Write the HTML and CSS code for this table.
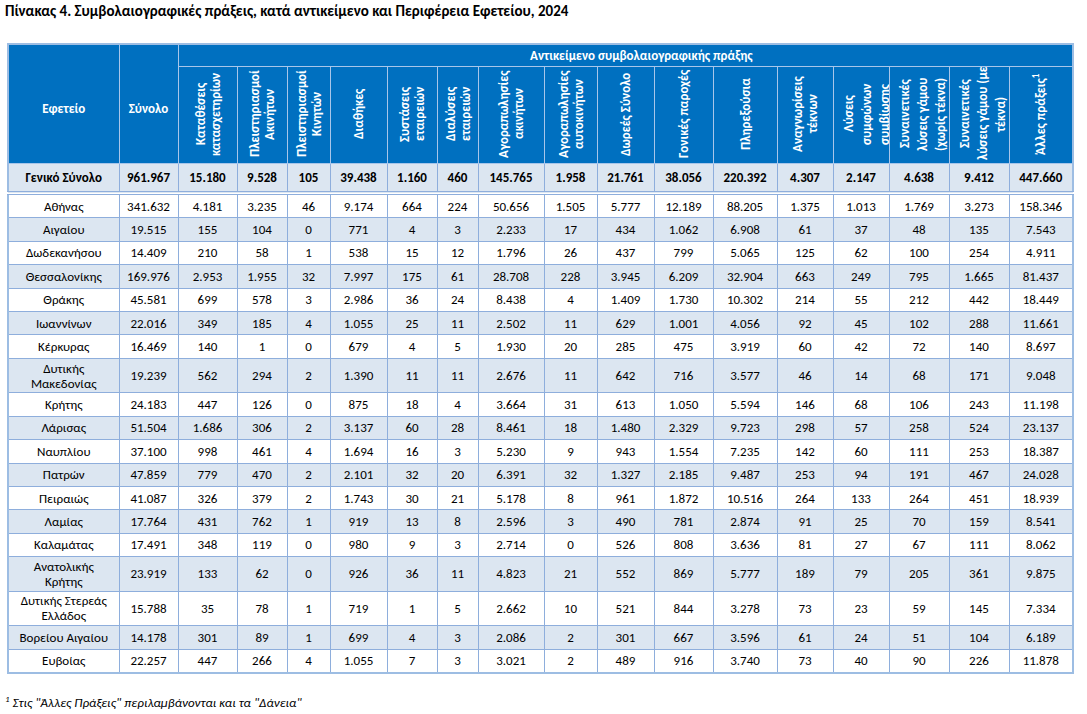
FILE: index.html
```html
<!DOCTYPE html>
<html lang="el">
<head>
<meta charset="utf-8">
<title>Πίνακας 4</title>
<link rel="stylesheet" href="styles.css">
</head>
<body>
<div class="page">
<h1 class="title">Πίνακας 4. Συμβολαιογραφικές πράξεις, κατά αντικείμενο και Περιφέρεια Εφετείου, 2024</h1>
<table class="grid">
<colgroup>
<col class="c-name"><col class="c59"><col class="c59"><col class="c50"><col class="c43"><col class="c57"><col class="c50"><col class="c41"><col class="c66"><col class="c53"><col class="c57"><col class="c59"><col class="c64"><col class="c56"><col class="c56"><col class="c60"><col class="c60"><col class="c64">
</colgroup>
<thead>
<tr class="hrow1">
<th rowspan="2" class="side">Εφετείο</th>
<th rowspan="2" class="side">Σύνολο</th>
<th colspan="16" class="group"><span class="group-label">Αντικείμενο συμβολαιογραφικής πράξης</span></th>
</tr>
<tr class="hrow2">
<th><span class="vt">Καταθέσεις<br>κατασχετηρίων</span></th>
<th><span class="vt">Πλειστηριασμοί<br>Ακινήτων</span></th>
<th><span class="vt">Πλειστηριασμοί<br>Κινητών</span></th>
<th><span class="vt">Διαθήκες</span></th>
<th><span class="vt">Συστάσεις<br>εταιρειών</span></th>
<th><span class="vt">Διαλύσεις<br>εταιρειών</span></th>
<th><span class="vt">Αγοραπωλησίες<br>ακινήτων</span></th>
<th><span class="vt">Αγοραπωλησίες<br>αυτοκινήτων</span></th>
<th><span class="vt">Δωρεές Σύνολο</span></th>
<th><span class="vt">Γονικές παροχές</span></th>
<th><span class="vt">Πληρεξούσια</span></th>
<th><span class="vt">Αναγνωρίσεις<br>τέκνων</span></th>
<th class="clip"><span class="vt">Λύσεις<br>συμφώνων<br>συμβίωσης</span></th>
<th class="clip"><span class="vt">Συναινετικές<br>λύσεις γάμου<br>(χωρίς τέκνα)</span></th>
<th class="clip"><span class="vt">Συναινετικές<br>λύσεις γάμου (με<br>τέκνα)</span></th>
<th><span class="vt">Άλλες πράξεις<sup>1</sup></span></th>
</tr>
</thead>
<tbody>
<tr class="total"><td>Γενικό Σύνολο</td><td>961.967</td><td>15.180</td><td>9.528</td><td>105</td><td>39.438</td><td>1.160</td><td>460</td><td>145.765</td><td>1.958</td><td>21.761</td><td>38.056</td><td>220.392</td><td>4.307</td><td>2.147</td><td>4.638</td><td>9.412</td><td>447.660</td></tr>
<tr><td>Αθήνας</td><td>341.632</td><td>4.181</td><td>3.235</td><td>46</td><td>9.174</td><td>664</td><td>224</td><td>50.656</td><td>1.505</td><td>5.777</td><td>12.189</td><td>88.205</td><td>1.375</td><td>1.013</td><td>1.769</td><td>3.273</td><td>158.346</td></tr>
<tr class="alt"><td>Αιγαίου</td><td>19.515</td><td>155</td><td>104</td><td>0</td><td>771</td><td>4</td><td>3</td><td>2.233</td><td>17</td><td>434</td><td>1.062</td><td>6.908</td><td>61</td><td>37</td><td>48</td><td>135</td><td>7.543</td></tr>
<tr><td>Δωδεκανήσου</td><td>14.409</td><td>210</td><td>58</td><td>1</td><td>538</td><td>15</td><td>12</td><td>1.796</td><td>26</td><td>437</td><td>799</td><td>5.065</td><td>125</td><td>62</td><td>100</td><td>254</td><td>4.911</td></tr>
<tr class="alt"><td>Θεσσαλονίκης</td><td>169.976</td><td>2.953</td><td>1.955</td><td>32</td><td>7.997</td><td>175</td><td>61</td><td>28.708</td><td>228</td><td>3.945</td><td>6.209</td><td>32.904</td><td>663</td><td>249</td><td>795</td><td>1.665</td><td>81.437</td></tr>
<tr><td>Θράκης</td><td>45.581</td><td>699</td><td>578</td><td>3</td><td>2.986</td><td>36</td><td>24</td><td>8.438</td><td>4</td><td>1.409</td><td>1.730</td><td>10.302</td><td>214</td><td>55</td><td>212</td><td>442</td><td>18.449</td></tr>
<tr class="alt"><td>Ιωαννίνων</td><td>22.016</td><td>349</td><td>185</td><td>4</td><td>1.055</td><td>25</td><td>11</td><td>2.502</td><td>11</td><td>629</td><td>1.001</td><td>4.056</td><td>92</td><td>45</td><td>102</td><td>288</td><td>11.661</td></tr>
<tr><td>Κέρκυρας</td><td>16.469</td><td>140</td><td>1</td><td>0</td><td>679</td><td>4</td><td>5</td><td>1.930</td><td>20</td><td>285</td><td>475</td><td>3.919</td><td>60</td><td>42</td><td>72</td><td>140</td><td>8.697</td></tr>
<tr class="alt tall"><td>Δυτικής<br>Μακεδονίας</td><td>19.239</td><td>562</td><td>294</td><td>2</td><td>1.390</td><td>11</td><td>11</td><td>2.676</td><td>11</td><td>642</td><td>716</td><td>3.577</td><td>46</td><td>14</td><td>68</td><td>171</td><td>9.048</td></tr>
<tr><td>Κρήτης</td><td>24.183</td><td>447</td><td>126</td><td>0</td><td>875</td><td>18</td><td>4</td><td>3.664</td><td>31</td><td>613</td><td>1.050</td><td>5.594</td><td>146</td><td>68</td><td>106</td><td>243</td><td>11.198</td></tr>
<tr class="alt"><td>Λάρισας</td><td>51.504</td><td>1.686</td><td>306</td><td>2</td><td>3.137</td><td>60</td><td>28</td><td>8.461</td><td>18</td><td>1.480</td><td>2.329</td><td>9.723</td><td>298</td><td>57</td><td>258</td><td>524</td><td>23.137</td></tr>
<tr><td>Ναυπλίου</td><td>37.100</td><td>998</td><td>461</td><td>4</td><td>1.694</td><td>16</td><td>3</td><td>5.230</td><td>9</td><td>943</td><td>1.554</td><td>7.235</td><td>142</td><td>60</td><td>111</td><td>253</td><td>18.387</td></tr>
<tr class="alt"><td>Πατρών</td><td>47.859</td><td>779</td><td>470</td><td>2</td><td>2.101</td><td>32</td><td>20</td><td>6.391</td><td>32</td><td>1.327</td><td>2.185</td><td>9.487</td><td>253</td><td>94</td><td>191</td><td>467</td><td>24.028</td></tr>
<tr><td>Πειραιώς</td><td>41.087</td><td>326</td><td>379</td><td>2</td><td>1.743</td><td>30</td><td>21</td><td>5.178</td><td>8</td><td>961</td><td>1.872</td><td>10.516</td><td>264</td><td>133</td><td>264</td><td>451</td><td>18.939</td></tr>
<tr class="alt"><td>Λαμίας</td><td>17.764</td><td>431</td><td>762</td><td>1</td><td>919</td><td>13</td><td>8</td><td>2.596</td><td>3</td><td>490</td><td>781</td><td>2.874</td><td>91</td><td>25</td><td>70</td><td>159</td><td>8.541</td></tr>
<tr><td>Καλαμάτας</td><td>17.491</td><td>348</td><td>119</td><td>0</td><td>980</td><td>9</td><td>3</td><td>2.714</td><td>0</td><td>526</td><td>808</td><td>3.636</td><td>81</td><td>27</td><td>67</td><td>111</td><td>8.062</td></tr>
<tr class="alt tall"><td>Ανατολικής<br>Κρήτης</td><td>23.919</td><td>133</td><td>62</td><td>0</td><td>926</td><td>36</td><td>11</td><td>4.823</td><td>21</td><td>552</td><td>869</td><td>5.777</td><td>189</td><td>79</td><td>205</td><td>361</td><td>9.875</td></tr>
<tr class="tall"><td>Δυτικής Στερεάς<br>Ελλάδος</td><td>15.788</td><td>35</td><td>78</td><td>1</td><td>719</td><td>1</td><td>5</td><td>2.662</td><td>10</td><td>521</td><td>844</td><td>3.278</td><td>73</td><td>23</td><td>59</td><td>145</td><td>7.334</td></tr>
<tr class="alt"><td>Βορείου Αιγαίου</td><td>14.178</td><td>301</td><td>89</td><td>1</td><td>699</td><td>4</td><td>3</td><td>2.086</td><td>2</td><td>301</td><td>667</td><td>3.596</td><td>61</td><td>24</td><td>51</td><td>104</td><td>6.189</td></tr>
<tr><td>Ευβοίας</td><td>22.257</td><td>447</td><td>266</td><td>4</td><td>1.055</td><td>7</td><td>3</td><td>3.021</td><td>2</td><td>489</td><td>916</td><td>3.740</td><td>73</td><td>40</td><td>90</td><td>226</td><td>11.878</td></tr>
</tbody>
</table>
<p class="note"><sup>1</sup> Στις "Άλλες Πράξεις" περιλαμβάνονται και τα "Δάνεια"</p>
</div>
</body>
</html>
```

FILE: styles.css
```css
html, body {
  margin: 0;
  padding: 0;
  background: #ffffff;
}

body {
  font-family: Carlito, Calibri, "Open Sans", sans-serif;
  color: #000000;
}

.page {
  padding: 2px 0 0 5px;
}

.title {
  margin: 0;
  font-size: 15px;
  font-weight: bold;
  line-height: 18px;
  height: 41px;
}

.grid {
  margin-left: 2px;
  border-collapse: collapse;
  table-layout: fixed;
  width: 1065px;
  border: 2px solid #9dbde3;
  font-size: 13px;
}

.c-name { width: 111px; }
.c59 { width: 59px; }
.c50 { width: 50px; }
.c43 { width: 43px; }
.c57 { width: 57px; }
.c41 { width: 41px; }
.c66 { width: 66px; }
.c53 { width: 53px; }
.c64 { width: 64px; }
.c56 { width: 56px; }
.c60 { width: 60px; }

th {
  background: #0070c0;
  color: #ffffff;
  font-weight: bold;
  border: 1px solid #a8c6ea;
  padding: 0;
  text-align: center;
  vertical-align: middle;
  overflow: hidden;
}

th.side {
  padding-top: 8px;
}

.hrow1 th.group {
  height: 21px;
}

.group-label {
  display: inline-block;
  padding-left: 32px;
}

.hrow2 th {
  height: 96px;
}

.vt {
  display: inline-block;
  writing-mode: vertical-rl;
  transform: rotate(180deg);
  white-space: nowrap;
  line-height: 15px;
  text-align: center;
  height: 92px;
}

.vt sup {
  font-size: 9px;
  line-height: 0;
}

th.clip {
  text-align: left;
  padding-left: 6px;
}

th.clip .vt {
  line-height: 18px;
}

td {
  border: 1px solid #8eaedc;
  padding: 0;
  height: 22.4px;
  text-align: center;
  vertical-align: middle;
  line-height: 15px;
  background: #ffffff;
}

tr.alt td {
  background: #dce6f1;
}

tr.tall td {
  height: 33.6px;
}

tr.total td {
  background: #dce6f1;
  font-weight: bold;
  height: 27px;
  border-bottom: 4px double #8eaedc;
}

.note {
  margin: 19px 0 0 0;
  font-size: 13px;
  font-style: italic;
}

.note sup {
  font-size: 9px;
}
```
